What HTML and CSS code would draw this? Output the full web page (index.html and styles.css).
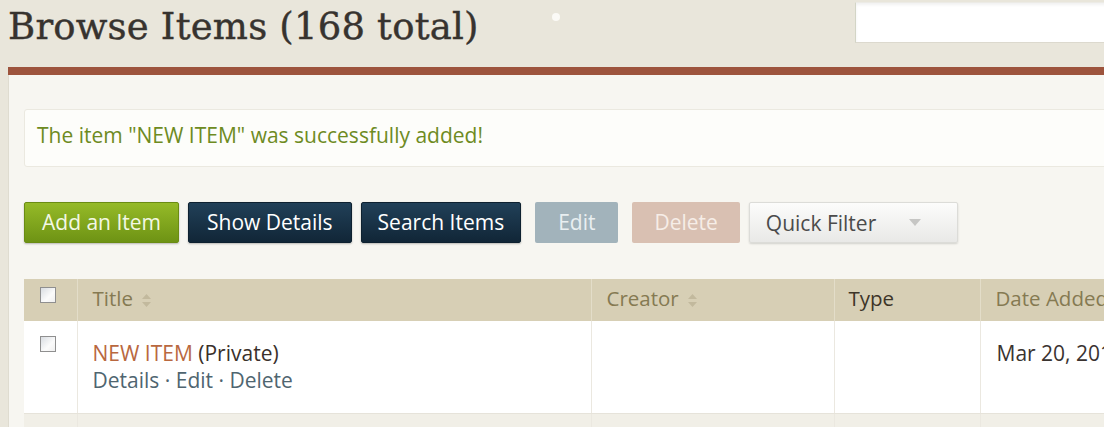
FILE: index.html
```html
<!DOCTYPE html>
<html lang="en">
<head>
<meta charset="utf-8">
<title>Browse Items</title>
<link rel="stylesheet" href="styles.css">
</head>
<body>
<div class="page">
  <header class="top">
    <h1 class="title">Browse Items (168 total)</h1>
    <div class="search"></div>
  </header>
  <div class="rule"></div>
  <main class="panel">
    <div class="flash">The item "NEW ITEM" was successfully added!</div>
    <div class="actions">
      <a class="btn btn-green">Add an Item</a>
      <a class="btn btn-dark">Show Details</a>
      <a class="btn btn-dark btn-search">Search Items</a>
      <a class="btn btn-edit">Edit</a>
      <a class="btn btn-delete">Delete</a>
      <div class="quick">Quick Filter
        <svg class="caret" width="12" height="8" viewBox="0 0 12 8"><path d="M0 0h12L6 7z" fill="#c6c6c4"/></svg>
      </div>
    </div>
    <table class="items">
      <colgroup>
        <col class="c-check"><col class="c-title"><col class="c-creator"><col class="c-type"><col class="c-date">
      </colgroup>
      <thead>
        <tr>
          <th class="check-cell"><span class="box"></span></th>
          <th class="sortable">Title <svg class="sort" width="9" height="13" viewBox="0 0 9 13"><path d="M4.5 0L9 5H0z M4.5 13L0 8h9z" fill="#c2b99d"/></svg></th>
          <th class="sortable">Creator <svg class="sort" width="9" height="13" viewBox="0 0 9 13"><path d="M4.5 0L9 5H0z M4.5 13L0 8h9z" fill="#c2b99d"/></svg></th>
          <th class="plain">Type</th>
          <th class="sortable">Date Added</th>
        </tr>
      </thead>
      <tbody>
        <tr class="row">
          <td class="check-cell"><span class="box"></span></td>
          <td class="title-cell">
            <div><a class="item-link">NEW ITEM</a> <span class="private">(Private)</span></div>
            <div class="row-actions"><a>Details</a> · <a>Edit</a> · <a>Delete</a></div>
          </td>
          <td></td>
          <td></td>
          <td class="date">Mar 20, 2014</td>
        </tr>
        <tr class="row-next">
          <td></td><td></td><td></td><td></td><td></td>
        </tr>
      </tbody>
    </table>
  </main>
</div>
</body>
</html>
```
FILE: styles.css
```css
html, body {
  margin: 0;
  padding: 0;
  overflow: hidden;
}
body {
  background: #e9e6db;
  font-family: "Open Sans", "Liberation Sans", sans-serif;
  font-size: 21px;
}
.page {
  width: 1160px;
  height: 427px;
  overflow: hidden;
}
.top {
  position: relative;
  display: flex;
  align-items: flex-start;
  height: 67px;
  padding-left: 8px;
  box-sizing: border-box;
}
.top::after {
  content: "";
  position: absolute;
  left: 552px;
  top: 13px;
  width: 8px;
  height: 8px;
  border-radius: 50%;
  background: #fbfaf6;
}
.title {
  margin: 0;
  padding-top: 5px;
  font-family: "DejaVu Serif", "Liberation Serif", serif;
  font-weight: normal;
  font-size: 37px;
  line-height: 44px;
  letter-spacing: 0.2px;
  color: #37332f;
  -webkit-text-stroke: 0.4px #37332f;
}
.search {
  margin-left: auto;
  margin-top: 2px;
  width: 305px;
  height: 41px;
  box-sizing: border-box;
  background: #fff;
  border-left: 1px solid #d3d5c6;
  border-top: 1px solid #ecebe6;
  border-bottom: 1px solid #dcd9ce;
  box-shadow: inset 0 2px 3px rgba(0, 0, 0, 0.06);
}
.rule {
  margin-left: 8px;
  height: 8px;
  background: #9d543d;
  box-shadow: 0 1px 0 #efd6c8;
}
.panel {
  margin-left: 8px;
  height: 360px;
  background: #f7f6f1;
  border-left: 1px solid #dfdcd0;
  padding: 34px 0 0 15px;
}
.flash {
  height: 58px;
  box-sizing: border-box;
  border: 1px solid #ebe9e0;
  border-radius: 3px;
  background: #fdfdfa;
  padding: 0 0 5px 12px;
  line-height: 51px;
  color: #6e8b1f;
}
.actions {
  display: flex;
  gap: 9px;
  margin-top: 35px;
  height: 41px;
}
.btn {
  display: block;
  height: 41px;
  box-sizing: border-box;
  padding: 0 17px;
  line-height: 39px;
  border: 1px solid transparent;
  border-radius: 2px;
  color: #fff;
}
.btn-green {
  background: linear-gradient(#95ba28, #6e9314);
  border-color: #6a8c13;
  color: #f3f8e4;
  box-shadow: 0 1px 2px rgba(0, 0, 0, 0.25);
}
.btn-dark {
  background: linear-gradient(#214058, #112637);
  border-color: #0e2130;
  box-shadow: 0 1px 2px rgba(0, 0, 0, 0.25);
  padding: 0 18px;
}
.btn-dark.btn-search {
  padding: 0 16px;
}
.btn-edit {
  margin-left: 5px;
  padding: 0 22px;
  background: #a2b3bb;
  color: #e9eff1;
}
.btn-delete {
  margin-left: 5px;
  padding: 0 21px;
  background: #d9c0b2;
  color: #f6ede7;
}
.quick {
  display: flex;
  align-items: center;
  width: 209px;
  height: 41px;
  box-sizing: border-box;
  padding: 0 16px;
  border: 1px solid #dcdcd8;
  border-radius: 2px;
  background: linear-gradient(#fcfcfb, #e9e9e7);
  box-shadow: 0 1px 2px rgba(0, 0, 0, 0.15);
  color: #4b4b4b;
}
.caret {
  margin-left: 33px;
}
.items {
  margin-top: 36px;
  width: 1136px;
  border-collapse: collapse;
  table-layout: fixed;
}
.c-check { width: 53px; }
.c-title { width: 514px; }
.c-creator { width: 243px; }
.c-type { width: 146px; }
.items th {
  height: 42px;
  box-sizing: border-box;
  background: #d7cfb5;
  text-align: left;
  font-weight: normal;
  font-size: 20.5px;
  line-height: 38px;
  padding: 0 0 4px 15px;
  border-left: 1px solid #e3ddc9;
  color: #857a52;
  white-space: nowrap;
  overflow: hidden;
}
.items th:first-child { border-left: none; }
.items th.plain { color: #3d3528; padding-left: 14px; }
.sort { margin-left: 4px; vertical-align: -1px; }
.items td {
  border-left: 1px solid #ebe8e0;
  vertical-align: top;
  padding: 19px 0 0 15px;
  line-height: 27px;
  color: #3a3330;
}
.items td:first-child { border-left: none; }
.row td {
  height: 92px;
  box-sizing: border-box;
  background: #fff;
  border-bottom: 1px solid #e6e3da;
}
.row-next td {
  height: 40px;
  background: #f1efe7;
  padding: 0;
}
.check-cell { padding-left: 16px !important; }
.items th.check-cell { padding-left: 16px; padding-top: 8px; line-height: 0; vertical-align: top; }
.items td.check-cell { padding-top: 15px; line-height: 0; }
.box {
  display: inline-block;
  width: 16px;
  height: 16px;
  box-sizing: border-box;
  border: 1px solid #8f8f8f;
  background: linear-gradient(135deg, #d9dde2, #fbfbfb 60%, #f0f0f0);
}
.item-link { color: #b9683f; }
.private { color: #3a302b; }
.row-actions { color: #4f6570; }
.row-actions a { color: #4f6570; }
.date { padding-left: 16px !important; color: #3a3330; white-space: nowrap; }
```
